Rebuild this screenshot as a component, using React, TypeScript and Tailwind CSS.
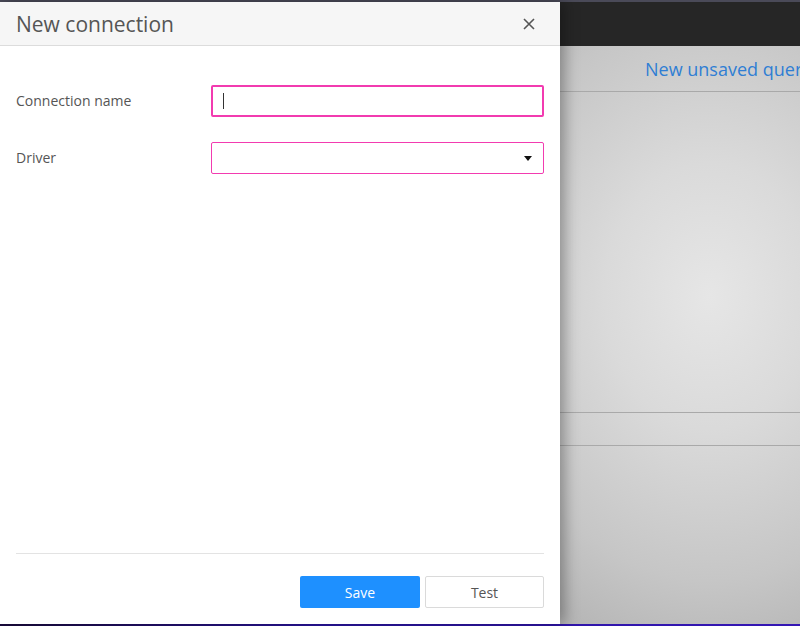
import React from "react";

export default function App() {
  return (
    <div className="w-[800px] h-[626px] flex flex-col overflow-hidden bg-[#b5b5b5]" style={{ fontFamily: '"Open Sans", "Noto Sans", sans-serif' }}>
      <div className="h-[2px] bg-[#4a4a58]" />
      <div className="flex flex-1 min-h-0">
        {/* Dialog */}
        <div className="w-[560px] flex flex-col bg-white relative z-10 shadow-[4px_0_14px_rgba(0,0,0,0.35)]">
          <div className="h-[44px] bg-[#f6f6f6] border-b border-[#dcdcdc] flex items-center justify-between pl-4 pr-[24px]">
            <span className="text-[21px] text-[#555] leading-none mt-[2px]">New connection</span>
            <svg width="14" height="14" viewBox="0 0 14 14" className="text-[#555]">
              <path d="M2 2 L12 12 M12 2 L2 12" stroke="currentColor" strokeWidth="1.6" />
            </svg>
          </div>
          <div className="flex-1 flex flex-col px-4">
            <div className="flex items-center mt-[39px] h-[32px]">
              <label className="w-[195px] text-[14px] text-[#555] -mt-[2px]">Connection name</label>
              <div className="flex-1 h-[32px] border-2 border-[#f23bb0] rounded-[2px] flex items-center pl-[10px]">
                <div className="w-px h-[16px] bg-[#333]" />
              </div>
            </div>
            <div className="flex items-center mt-[25px] h-[32px]">
              <label className="w-[195px] text-[14px] text-[#555] -mt-[2px]">Driver</label>
              <div className="flex-1 h-[32px] border border-[#f23bb0] rounded-[2px] flex items-center justify-end pr-[11px]">
                <svg width="8" height="5" viewBox="0 0 8 5">
                  <path d="M0 0 L8 0 L4 5 Z" fill="#111" />
                </svg>
              </div>
            </div>
            <div className="flex-1" />
            <div className="border-t border-[#e3e3e3]" />
            <div className="flex justify-end gap-[5px] pt-[22px] pb-[16px]">
              <button className="w-[120px] h-[32px] bg-[#1e90ff] text-white text-[14px] rounded-[2px]">Save</button>
              <button className="w-[119px] h-[32px] bg-white border border-[#dadada] text-[#555] text-[14px] rounded-[2px]">Test</button>
            </div>
          </div>
        </div>
        {/* Background app */}
        <div className="flex-1 flex flex-col min-w-0">
          <div className="h-[44px] bg-[#262626]" />
          <div className="flex-1 flex flex-col bg-[radial-gradient(ellipse_300px_380px_at_150px_250px,#e6e6e6,#dadada_35%,#c6c6c6_75%,#b4b4b4_100%)] relative">
            <div className="h-[46px] border-b border-[#a9a9a9] flex items-center pl-[85px] whitespace-nowrap overflow-hidden">
              <span className="text-[18px] text-[#2f7ed4] mt-[2px]">New unsaved query</span>
            </div>
            <div className="h-[320px]" />
            <div className="h-[34px] border-t border-b border-[#a9a9a9]" />
            <div className="flex-1" />
          </div>
        </div>
      </div>
      <div className="h-[2px] bg-[linear-gradient(to_right,#1a0b3c,#2a14a0_40%,#3416b4)]" />
    </div>
  );
}
